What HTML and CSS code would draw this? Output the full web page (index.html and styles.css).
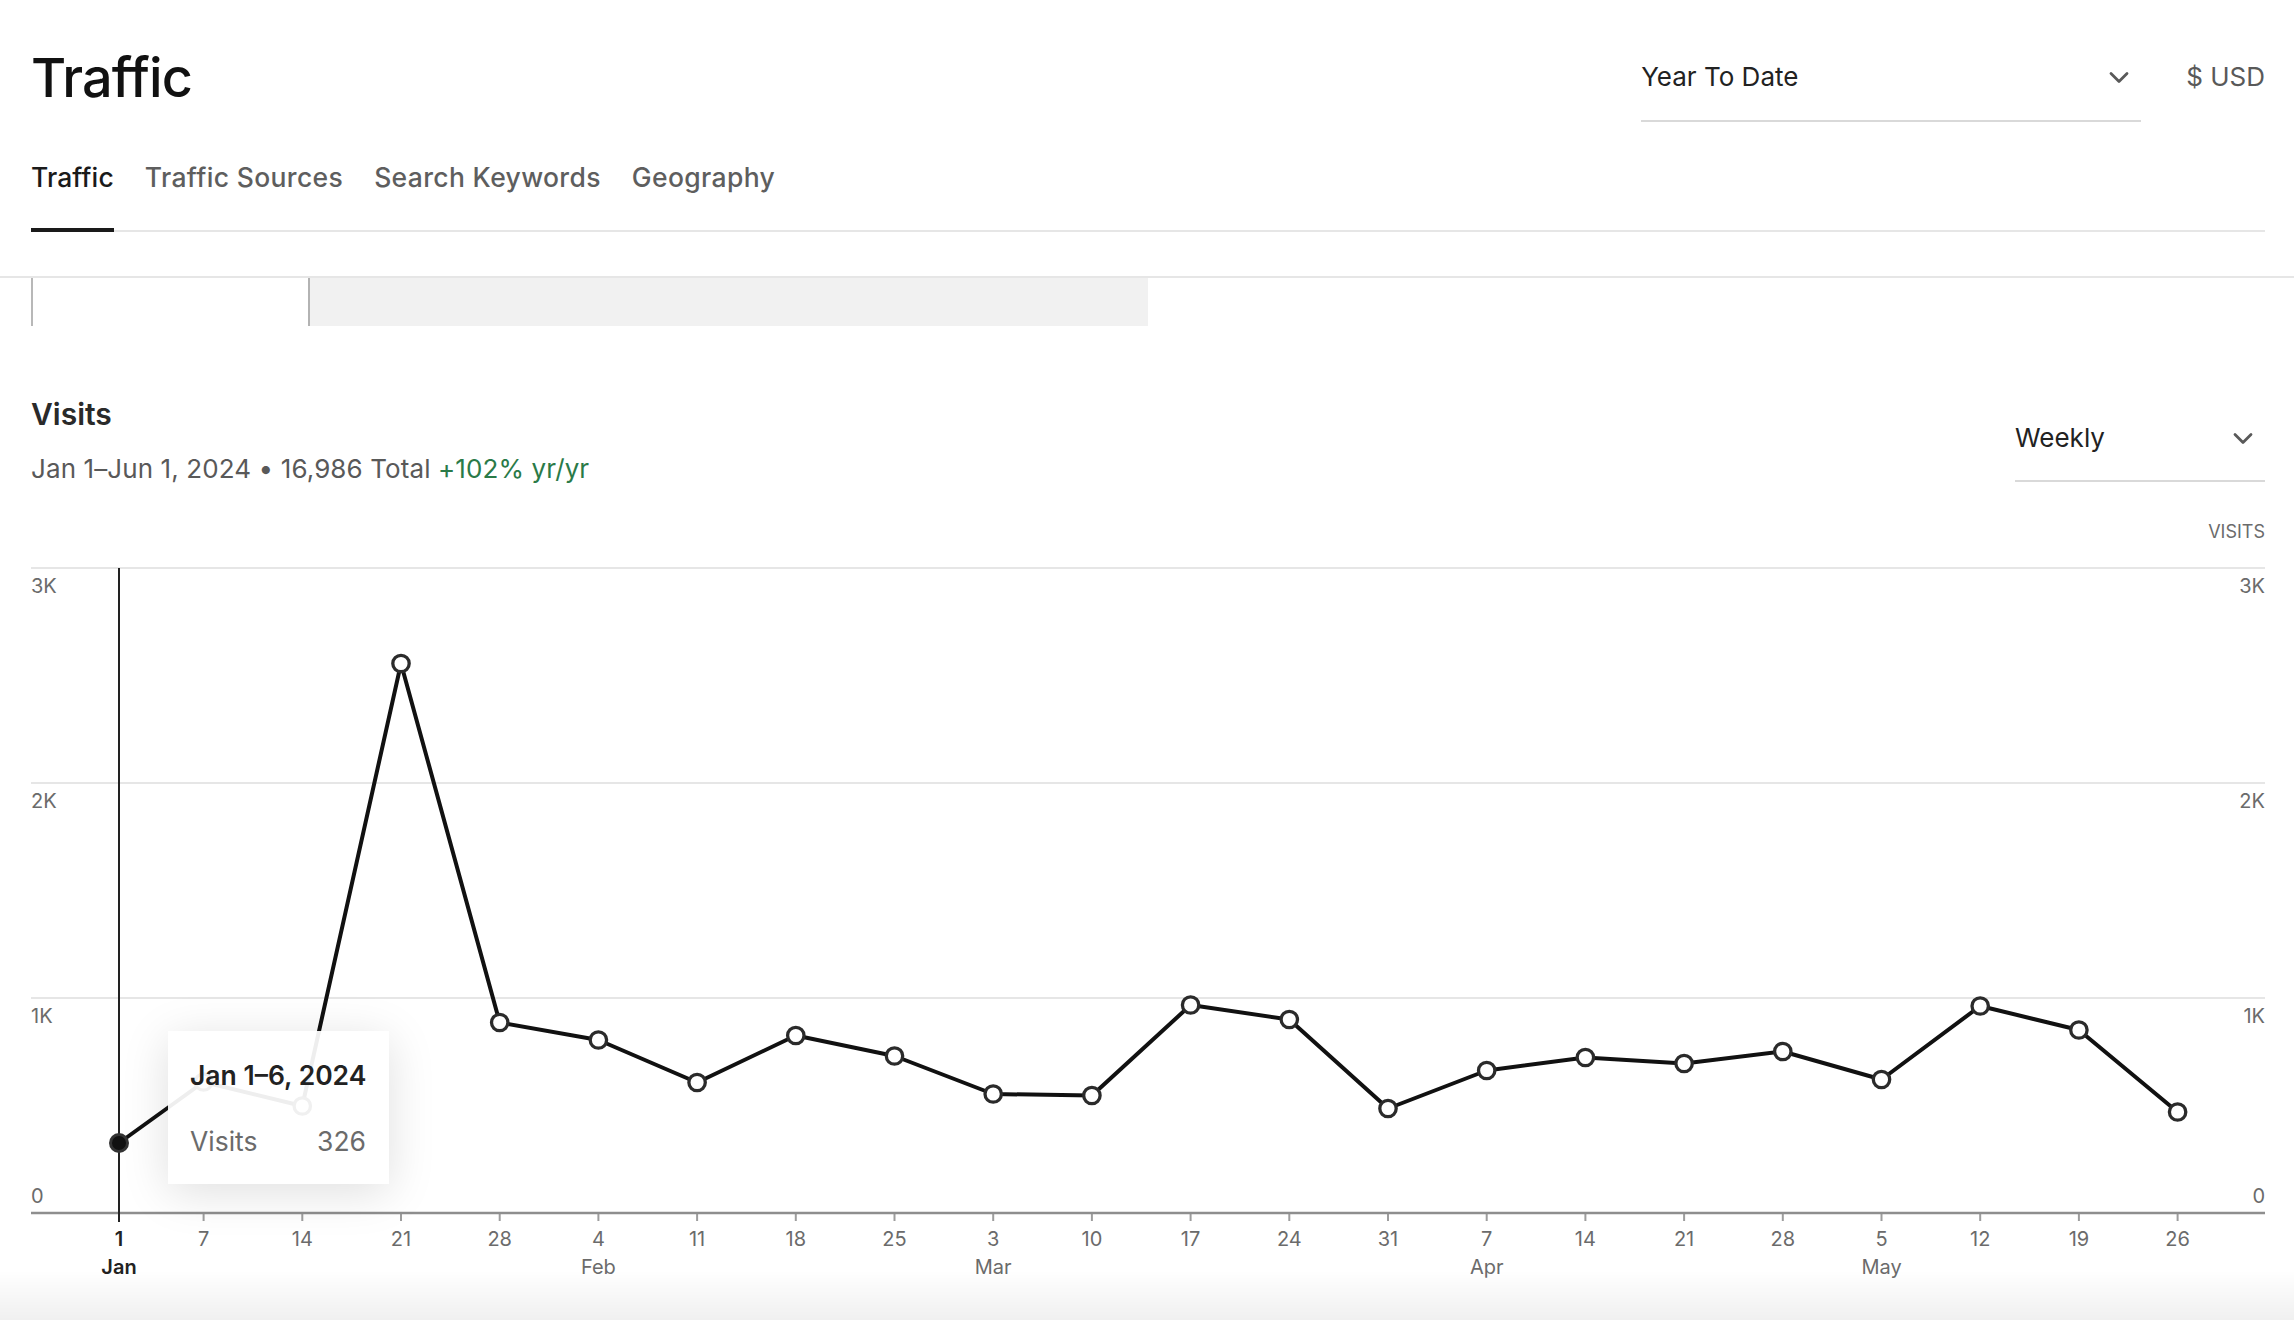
FILE: index.html
```html
<!DOCTYPE html>
<html lang="en">
<head>
<meta charset="utf-8">
<title>Traffic</title>
<link rel="stylesheet" href="styles.css">
</head>
<body>
<header class="page-header">
  <div class="header-inner">
    <div class="topbar">
      <h1 class="page-title">Traffic</h1>
      <div class="topbar-controls">
        <div class="select select-range">
          <span>Year To Date</span>
          <svg class="chev" width="20" height="13" viewBox="0 0 20 13"><path d="M2 2.5 L10 10.5 L18 2.5"/></svg>
        </div>
        <span class="currency">$ USD</span>
      </div>
    </div>
    <nav class="tabs">
      <a class="tab active">Traffic</a>
      <a class="tab">Traffic Sources</a>
      <a class="tab">Search Keywords</a>
      <a class="tab">Geography</a>
    </nav>
  </div>
</header>

<div class="cards-strip">
  <div class="card-stub card-stub-white"></div>
  <div class="card-stub card-stub-gray"></div>
</div>

<section class="visits">
  <div class="visits-head">
    <div class="visits-summary">
      <h2 class="visits-title">Visits</h2>
      <p class="visits-sub">Jan 1–Jun 1, 2024 • 16,986 Total <span class="growth">+102% yr/yr</span></p>
    </div>
    <div class="select select-period">
      <span>Weekly</span>
      <svg class="chev" width="20" height="13" viewBox="0 0 20 13"><path d="M2 2.5 L10 10.5 L18 2.5"/></svg>
    </div>
  </div>
  <div class="axis-caption">VISITS</div>
  <div class="chart">
    <svg class="chart-svg" width="2234" height="735" viewBox="31 555 2234 735">
      <g class="grid">
        <line x1="31" x2="2265" y1="568" y2="568"/>
        <line x1="31" x2="2265" y1="783" y2="783"/>
        <line x1="31" x2="2265" y1="998" y2="998"/>
      </g>
      <g class="y-labels">
        <text x="31" y="593">3K</text>
        <text x="31" y="808">2K</text>
        <text x="31" y="1023">1K</text>
        <text x="31" y="1203">0</text>
      </g>
      <g class="y-labels y-labels-right">
        <text x="2265" y="593">3K</text>
        <text x="2265" y="808">2K</text>
        <text x="2265" y="1023">1K</text>
        <text x="2265" y="1203">0</text>
      </g>
      <g class="ticks">
        <line x1="119" x2="119" y1="1213" y2="1221"/>
        <line x1="203.6" x2="203.6" y1="1213" y2="1221"/>
        <line x1="302.3" x2="302.3" y1="1213" y2="1221"/>
        <line x1="401" x2="401" y1="1213" y2="1221"/>
        <line x1="499.7" x2="499.7" y1="1213" y2="1221"/>
        <line x1="598.4" x2="598.4" y1="1213" y2="1221"/>
        <line x1="697.1" x2="697.1" y1="1213" y2="1221"/>
        <line x1="795.8" x2="795.8" y1="1213" y2="1221"/>
        <line x1="894.5" x2="894.5" y1="1213" y2="1221"/>
        <line x1="993.2" x2="993.2" y1="1213" y2="1221"/>
        <line x1="1091.9" x2="1091.9" y1="1213" y2="1221"/>
        <line x1="1190.6" x2="1190.6" y1="1213" y2="1221"/>
        <line x1="1289.3" x2="1289.3" y1="1213" y2="1221"/>
        <line x1="1388" x2="1388" y1="1213" y2="1221"/>
        <line x1="1486.7" x2="1486.7" y1="1213" y2="1221"/>
        <line x1="1585.4" x2="1585.4" y1="1213" y2="1221"/>
        <line x1="1684.1" x2="1684.1" y1="1213" y2="1221"/>
        <line x1="1782.8" x2="1782.8" y1="1213" y2="1221"/>
        <line x1="1881.5" x2="1881.5" y1="1213" y2="1221"/>
        <line x1="1980.2" x2="1980.2" y1="1213" y2="1221"/>
        <line x1="2078.9" x2="2078.9" y1="1213" y2="1221"/>
        <line x1="2177.6" x2="2177.6" y1="1213" y2="1221"/>
      </g>
      <line class="axis" x1="31" x2="2265" y1="1213" y2="1213"/>
      <g class="day-labels">
        <text class="current" x="119" y="1245.5">1</text>
        <text x="203.6" y="1245.5">7</text>
        <text x="302.3" y="1245.5">14</text>
        <text x="401" y="1245.5">21</text>
        <text x="499.7" y="1245.5">28</text>
        <text x="598.4" y="1245.5">4</text>
        <text x="697.1" y="1245.5">11</text>
        <text x="795.8" y="1245.5">18</text>
        <text x="894.5" y="1245.5">25</text>
        <text x="993.2" y="1245.5">3</text>
        <text x="1091.9" y="1245.5">10</text>
        <text x="1190.6" y="1245.5">17</text>
        <text x="1289.3" y="1245.5">24</text>
        <text x="1388" y="1245.5">31</text>
        <text x="1486.7" y="1245.5">7</text>
        <text x="1585.4" y="1245.5">14</text>
        <text x="1684.1" y="1245.5">21</text>
        <text x="1782.8" y="1245.5">28</text>
        <text x="1881.5" y="1245.5">5</text>
        <text x="1980.2" y="1245.5">12</text>
        <text x="2078.9" y="1245.5">19</text>
        <text x="2177.6" y="1245.5">26</text>
      </g>
      <g class="month-labels">
        <text class="current" x="119" y="1273.5">Jan</text>
        <text x="598.4" y="1273.5">Feb</text>
        <text x="993.2" y="1273.5">Mar</text>
        <text x="1486.7" y="1273.5">Apr</text>
        <text x="1881.5" y="1273.5">May</text>
      </g>
      <line class="hover-line" x1="119" x2="119" y1="568" y2="1222"/>
      <polyline class="series" points="119,1143 203.6,1082 302.3,1106 401,663.5 499.7,1022.5 598.4,1040 697.1,1082.5 795.8,1035.5 894.5,1056 993.2,1094 1091.9,1095.5 1190.6,1005 1289.3,1019.5 1388,1108.5 1486.7,1070.5 1585.4,1057.5 1684.1,1063.5 1782.8,1051.5 1881.5,1079.5 1980.2,1006 2078.9,1030 2177.6,1112"/>
      <g class="points">
        <circle cx="203.6" cy="1082" r="8.2"/>
        <circle cx="302.3" cy="1106" r="8.2"/>
        <circle cx="401" cy="663.5" r="8.2"/>
        <circle cx="499.7" cy="1022.5" r="8.2"/>
        <circle cx="598.4" cy="1040" r="8.2"/>
        <circle cx="697.1" cy="1082.5" r="8.2"/>
        <circle cx="795.8" cy="1035.5" r="8.2"/>
        <circle cx="894.5" cy="1056" r="8.2"/>
        <circle cx="993.2" cy="1094" r="8.2"/>
        <circle cx="1091.9" cy="1095.5" r="8.2"/>
        <circle cx="1190.6" cy="1005" r="8.2"/>
        <circle cx="1289.3" cy="1019.5" r="8.2"/>
        <circle cx="1388" cy="1108.5" r="8.2"/>
        <circle cx="1486.7" cy="1070.5" r="8.2"/>
        <circle cx="1585.4" cy="1057.5" r="8.2"/>
        <circle cx="1684.1" cy="1063.5" r="8.2"/>
        <circle cx="1782.8" cy="1051.5" r="8.2"/>
        <circle cx="1881.5" cy="1079.5" r="8.2"/>
        <circle cx="1980.2" cy="1006" r="8.2"/>
        <circle cx="2078.9" cy="1030" r="8.2"/>
        <circle cx="2177.6" cy="1112" r="8.2"/>
      </g>
      <circle class="point-active" cx="119" cy="1143" r="8.5"/>
    </svg>
    <div class="tooltip">
      <div class="tooltip-title">Jan 1–6, 2024</div>
      <div class="tooltip-row"><span>Visits</span><span>326</span></div>
    </div>
  </div>
</section>

<div class="bottom-fade"></div>
</body>
</html>
```

FILE: styles.css
```css
html, body {
  margin: 0;
  padding: 0;
}

body {
  font-family: Inter, "Noto Sans", "Liberation Sans", sans-serif;
  color: #222;
  background: #fff;
  height: 1320px;
  overflow: hidden;
}

/* ---------- header ---------- */
.page-header {
  border-bottom: 2px solid #e6e6e6;
  padding-bottom: 44px;
}

.header-inner {
  padding: 44px 29px 0 31px;
}

.topbar {
  display: flex;
  justify-content: space-between;
  align-items: flex-start;
}

.page-title {
  margin: 0;
  font-size: 54px;
  line-height: 68px;
  font-weight: 500;
  letter-spacing: -0.9px;
  color: #111;
}

.topbar-controls {
  display: flex;
  align-items: baseline;
  margin-top: 17px;
}

.select {
  display: flex;
  align-items: center;
  justify-content: space-between;
  box-sizing: border-box;
  border-bottom: 2px solid #d9d9d9;
  font-size: 26px;
  line-height: 32px;
  color: #222;
  padding-right: 12px;
}

.select-range {
  width: 500px;
  padding-bottom: 27px;
}

.chev {
  display: block;
  flex: none;
}

.chev path {
  fill: none;
  stroke: #595959;
  stroke-width: 2.8;
  stroke-linecap: round;
  stroke-linejoin: round;
}

.currency {
  margin-left: 45px;
  font-size: 26px;
  line-height: 32px;
  color: #595959;
}

.tabs {
  display: flex;
  gap: 31px;
  margin-top: 38.5px;
  border-bottom: 2px solid #e6e6e6;
}

.tab {
  font-size: 26.5px;
  line-height: 32px;
  font-weight: 500;
  letter-spacing: 0.35px;
  color: #5e5e5e;
  padding-bottom: 35.5px;
  border-bottom: 4px solid transparent;
  margin-bottom: -2px;
  cursor: pointer;
}

.tab.active {
  color: #1a1a1a;
  border-bottom-color: #1a1a1a;
  letter-spacing: 0.1px;
}

/* ---------- clipped stat cards ---------- */
.cards-strip {
  display: flex;
  padding-left: 31px;
  height: 48px;
}

.card-stub-white {
  width: 275px;
  border-left: 2px solid #b8b8b8;
}

.card-stub-gray {
  width: 838px;
  border-left: 2px solid #b3b3b3;
  background: #f1f1f1;
}

/* ---------- visits section ---------- */
.visits {
  padding: 70px 29px 0 31px;
}

.visits-head {
  display: flex;
  justify-content: space-between;
  align-items: flex-start;
}

.visits-title {
  margin: 0;
  font-size: 30px;
  line-height: 36px;
  font-weight: 600;
  color: #2a2a2a;
}

.visits-sub {
  margin: 21px 0 0;
  font-size: 26px;
  line-height: 32px;
  letter-spacing: 0.1px;
  color: #595959;
}

.growth {
  color: #2a7a48;
}

.select-period {
  width: 250px;
  margin-top: 26px;
  padding-bottom: 26px;
}

.axis-caption {
  margin-top: 36px;
  text-align: right;
  font-size: 18px;
  line-height: 22px;
  color: #6b6b6b;
}

.chart {
  position: relative;
  margin-top: 12px;
}

.chart-svg {
  display: block;
  font-family: Inter, "Noto Sans", "Liberation Sans", sans-serif;
}

.grid line {
  stroke: #e6e6e6;
  stroke-width: 2;
}

.y-labels text {
  font-size: 20px;
  fill: #6b6b6b;
}

.y-labels-right text {
  text-anchor: end;
}

.ticks line {
  stroke: #9d9d9d;
  stroke-width: 2;
}

.axis {
  stroke: #8e8e8e;
  stroke-width: 2.5;
}

.day-labels text,
.month-labels text {
  font-size: 20px;
  fill: #6b6b6b;
  text-anchor: middle;
}

.day-labels text.current,
.month-labels text.current {
  fill: #222;
  font-weight: 600;
}

.hover-line {
  stroke: #222;
  stroke-width: 2;
}

.series {
  fill: none;
  stroke: #111;
  stroke-width: 4;
  stroke-linejoin: round;
  stroke-linecap: round;
}

.points circle {
  fill: #fff;
  stroke: #2b2b2b;
  stroke-width: 3.3;
}

.point-active {
  fill: #111;
  stroke: #333;
  stroke-width: 3;
}

.tooltip {
  position: absolute;
  left: 137px;
  top: 476px;
  width: 221px;
  box-sizing: border-box;
  padding: 28px 23px 27px 22px;
  background: rgba(255, 255, 255, 0.93);
  box-shadow: 0 8px 44px rgba(0, 0, 0, 0.13);
  white-space: nowrap;
}

.tooltip-title {
  font-size: 26.5px;
  line-height: 32px;
  font-weight: 600;
  color: #222;
  letter-spacing: 0;
}

.tooltip-row {
  display: flex;
  justify-content: space-between;
  margin-top: 34px;
  font-size: 26.5px;
  line-height: 32px;
  color: #6b6b6b;
}

/* ---------- bottom shadow of fixed bar ---------- */
.bottom-fade {
  position: fixed;
  left: 0;
  right: 0;
  bottom: 0;
  height: 50px;
  background: linear-gradient(to bottom, rgba(0, 0, 0, 0), rgba(0, 0, 0, 0.06));
  pointer-events: none;
}
```
